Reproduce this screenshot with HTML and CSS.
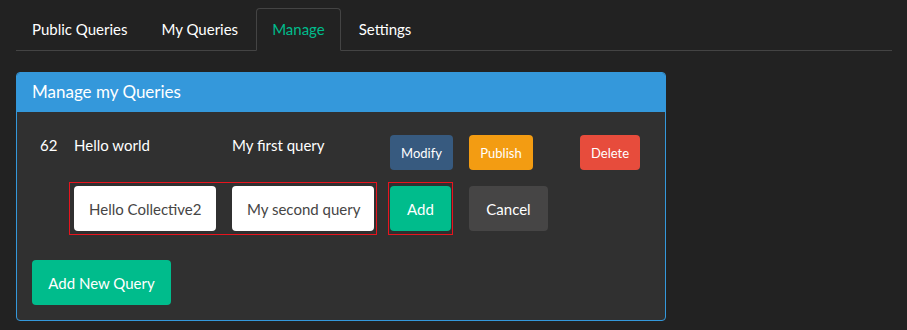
FILE: index.html
```html
<!DOCTYPE html>
<html lang="en">
<head>
  <meta charset="UTF-8" />
  <meta name="viewport" content="width=device-width, initial-scale=1.0" />
  <title>Manage Queries</title>
  <link rel="stylesheet" href="styles.css">
</head>
<body>
  <!-- Tabs -->
  <ul class="tabs">
    <li class="tabs__item"><a href="#">Public Queries</a></li>
    <li class="tabs__item"><a href="#">My Queries</a></li>
    <li class="tabs__item active"><a href="#">Manage</a></li>
    <li class="tabs__item"><a href="#">Settings</a></li>
  </ul>

  <!-- Manage panel -->
  <div class="panel">
    <div class="panel__heading">Manage my Queries</div>
    <div class="panel__body">
      <div class="query-row">
        <span class="query-id">62</span>
        <span class="query-name">Hello world</span>
        <span class="query-desc">My first query</span>
        <button class="btn btn-sm btn-primary">Modify</button>
        <button class="btn btn-sm btn-warning">Publish</button>
        <button class="btn btn-sm btn-danger">Delete</button>
      </div>

      <div class="edit-row">
        <div class="outline outline--fields">
          <input type="text" class="field" value="Hello Collective2" />
          <input type="text" class="field" value="My second query" />
        </div>
        <div class="outline outline--add">
          <button class="btn btn-success btn-add">Add</button>
        </div>
        <button class="btn btn-default btn-cancel">Cancel</button>
      </div>

      <button class="btn btn-success btn-new">Add New Query</button>
    </div>
  </div>
</body>
</html>
```

FILE: styles.css
```css
:root {
  --bg-color: #222;
  --panel-bg: #303030;
  --border-color: #444;
  --text-color: #fff;
  --primary: #375a7f;
  --success: #00bc8c;
  --info: #3498db;
  --warning: #f39c12;
  --danger: #e74c3c;
  --default: #464545;
  --input-text: #464545;
}

body {
  font-family: 'Lato', sans-serif;
  font-size: 15px;
  line-height: 1.42857;
  margin: 0;
  padding: 8px 15px 0 16px;
  background-color: var(--bg-color);
  color: var(--text-color);
}

/* Tabs */
.tabs {
  list-style: none;
  margin: 0;
  padding: 0;
  display: flex;
  border-bottom: 1px solid var(--border-color);
}

.tabs__item {
  margin-bottom: -1px;
}

.tabs__item a {
  display: block;
  margin-right: 2px;
  padding: 10px 15px;
  border: 1px solid transparent;
  border-radius: 4px 4px 0 0;
  color: var(--text-color);
  text-decoration: none;
}

.tabs__item.active a {
  color: var(--success);
  background-color: var(--bg-color);
  border-color: var(--border-color);
  border-bottom-color: transparent;
}

/* Panel */
.panel {
  box-sizing: border-box;
  width: 650px;
  margin-top: 21px;
  border: 1px solid var(--info);
  border-radius: 4px;
  background-color: var(--panel-bg);
  overflow: hidden;
}

.panel__heading {
  background-color: var(--info);
  padding: 9px 15px 10px;
  font-size: 17px;
  line-height: 20px;
}

.panel__body {
  padding: 23px 15px 15px;
}

/* Rows */
.query-row {
  display: flex;
  align-items: flex-start;
  height: 35px;
}

.query-id {
  margin-left: 8px;
  width: 34px;
  line-height: 21px;
}

.query-name,
.query-desc {
  width: 158px;
  line-height: 21px;
}

.edit-row {
  display: flex;
  align-items: flex-start;
  margin-top: 12px;
}

.outline {
  display: flex;
  border: 1px solid #e8141e;
}

.outline--fields {
  gap: 16px;
  margin-left: 37px;
  padding: 3px 2px 3px 4px;
}

.outline--add {
  margin-left: 11px;
  padding: 3px 1px;
}

.field {
  width: 142px;
  height: 45px;
  box-sizing: border-box;
  padding: 10px 8px 10px 15px;
  border: none;
  border-radius: 4px;
  background-color: #fff;
  color: var(--input-text);
  font-family: inherit;
  font-size: 15px;
}

/* Buttons */
.btn {
  font-family: inherit;
  color: var(--text-color);
  border: none;
  border-radius: 4px;
  cursor: pointer;
  height: 45px;
  padding: 0 15px;
  font-size: 15px;
}

.btn-sm {
  height: 35px;
  font-size: 13px;
  padding: 0 11px;
}

.btn-primary { background-color: var(--primary); margin-right: 16px; width: 63px; }
.btn-warning { background-color: var(--warning); margin-right: 47px; width: 64px; }
.btn-danger { background-color: var(--danger); width: 60px; }
.btn-success { background-color: var(--success); }
.btn-default { background-color: var(--default); }

.btn-add {
  width: 61px;
}

.btn-cancel {
  width: 79px;
  margin-left: 16px;
  margin-top: 4px;
}

.btn-new {
  display: block;
  width: 139px;
  margin-top: 25px;
}
```
